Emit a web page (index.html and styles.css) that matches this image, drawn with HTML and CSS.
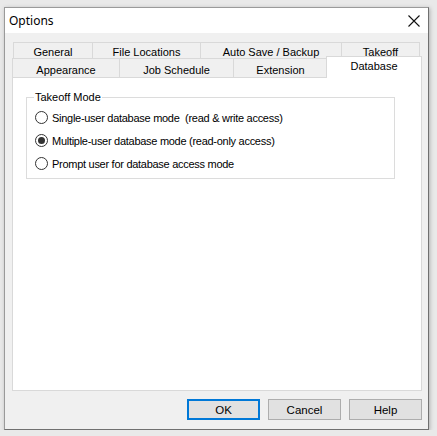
FILE: index.html
```html
<!DOCTYPE html>
<html>
<head>
<meta charset="utf-8">
<link rel="stylesheet" href="styles.css">
</head>
<body>
<div class="window">
  <div class="titlebar">
    <span class="title">Options</span>
    <svg class="close" width="12" height="12" viewBox="0 0 12 12"><path d="M0.5 0.5 L11.5 11.5 M11.5 0.5 L0.5 11.5" stroke="#111" stroke-width="1.1" fill="none"/></svg>
  </div>
  <div class="content">
    <div class="tabs">
      <div class="row row1">
        <div class="tab w79">General</div>
        <div class="tab w108">File Locations</div>
        <div class="tab w141">Auto Save / Backup</div>
        <div class="tab w78">Takeoff</div>
      </div>
      <div class="row row2">
        <div class="tab w107">Appearance</div>
        <div class="tab w114">Job Schedule</div>
        <div class="tab w94">Extension</div>
        <div class="tab sel">Database</div>
      </div>
    </div>
    <div class="panel">
      <fieldset class="group">
        <legend>Takeoff Mode</legend>
        <div class="opt"><span class="radio"></span><span class="lbl">Single-user database mode&nbsp; (read &amp; write access)</span></div>
        <div class="opt"><span class="radio on"></span><span class="lbl">Multiple-user database mode (read-only access)</span></div>
        <div class="opt"><span class="radio"></span><span class="lbl">Prompt user for database access mode</span></div>
      </fieldset>
    </div>
    <div class="buttons">
      <div class="btn default">OK</div>
      <div class="btn">Cancel</div>
      <div class="btn">Help</div>
    </div>
  </div>
</div>
</body>
</html>
```
FILE: styles.css
```css
* { box-sizing: border-box; }
body {
  margin: 0;
  background: #e9e9e9;
  font-family: "Liberation Sans", Arial, sans-serif;
  font-size: 11px;
  color: #000;
}
.window {
  margin: 7px 0 0 4px;
  width: 425px;
  height: 423px;
  border: 1px solid #9a9a9a;
  border-right-color: #707070;
  border-bottom-color: #707070;
  box-shadow: 1px 1px 4px rgba(0,0,0,0.25);
  background: #f0f0f0;
  display: flex;
  flex-direction: column;
}
.titlebar {
  height: 25px;
  background: #fff;
  display: flex;
  align-items: center;
  justify-content: space-between;
  padding: 0 8px 0 4px;
}
.title {
  font-family: "Noto Sans", "Open Sans", sans-serif;
  font-size: 12px;
  margin-top: -1px;
}
.close { margin-top: 1px; }
.content {
  flex: 1;
  padding: 9px 0 0 7px;
}
.row { display: flex; }
.row1 { margin-left: 1px; height: 17px; }
.row2 { height: 20px; margin-top: -1px; }
.tab {
  border: 1px solid #d9d9d9;
  margin-left: -1px;
  background: #f0f0f0;
  display: flex;
  align-items: center;
  justify-content: center;
  padding-top: 2px;
}
.row2 .tab { padding-top: 3px; }
.row1 .tab:first-child, .row2 .tab:first-child { margin-left: 0; }
.w79 { width: 80px; }
.w108 { width: 109px; }
.w141 { width: 142px; }
.w78 { width: 79px; }
.w107 { width: 108px; }
.w114 { width: 115px; }
.w94 { width: 95px; }
.row2 .tab.sel {
  width: 96px;
  height: 22px;
  margin-top: -2px;
  margin-left: -2px;
  background: #fff;
  border-bottom: none;
  position: relative;
  z-index: 2;
  align-items: flex-start;
  padding-top: 3px;
}
.panel {
  width: 410px;
  height: 314px;
  margin-top: -1px;
  border: 1px solid #d9d9d9;
  background: #fff;
  padding: 13px 0 0 13px;
}
.group {
  margin: 0;
  width: 369px;
  height: 88px;
  border: 1px solid #dcdcdc;
  padding: 3px 0 0 8px;
}
.group legend {
  padding: 0 1px;
  margin-left: -1px;
}
.opt {
  display: flex;
  align-items: center;
  height: 23px;
}
.lbl { letter-spacing: -0.28px; }
.radio {
  width: 13px;
  height: 13px;
  border: 1px solid #333;
  border-radius: 50%;
  margin-right: 4px;
  display: flex;
  align-items: center;
  justify-content: center;
  background: #fff;
}
.radio.on::after {
  content: "";
  width: 7px;
  height: 7px;
  border-radius: 50%;
  background: #333;
}
.buttons {
  display: flex;
  justify-content: flex-end;
  gap: 8px;
  padding: 8px 6px 0 0;
}
.btn {
  width: 73px;
  height: 21px;
  background: #e1e1e1;
  border: 1px solid #adadad;
  display: flex;
  align-items: center;
  justify-content: center;
  font-size: 11.5px;
}
.btn.default {
  border: 2px solid #0078d7;
}
```
